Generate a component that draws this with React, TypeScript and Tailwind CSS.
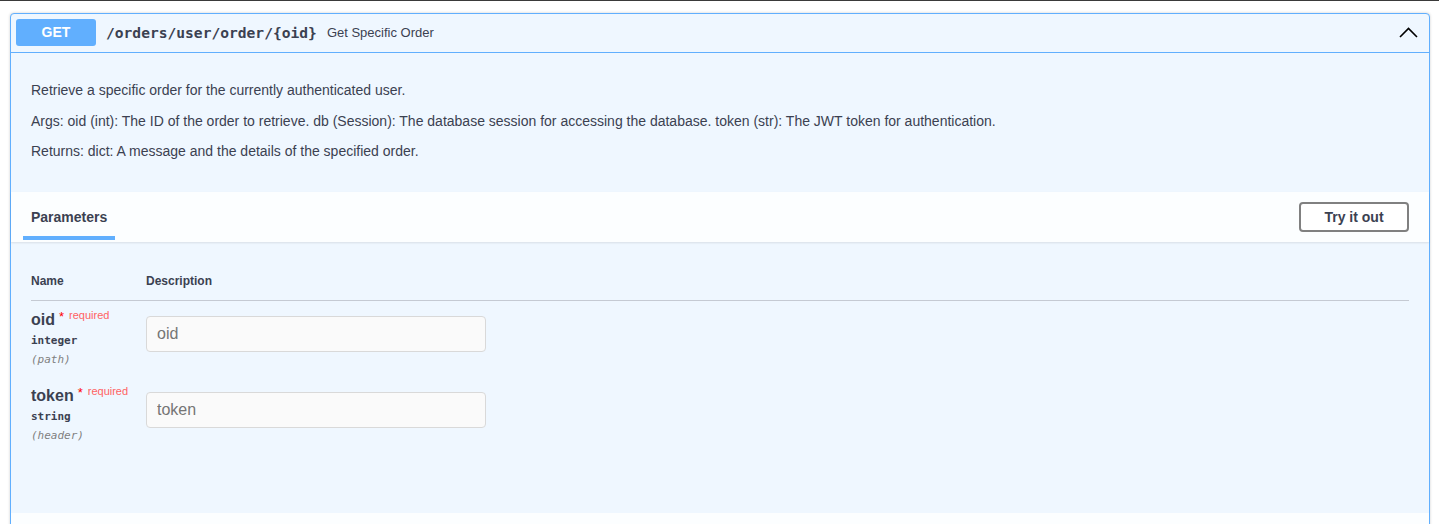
const params = [
  { name: 'oid', type: 'integer', location: '(path)' },
  { name: 'token', type: 'string', location: '(header)' },
];

const mono = "font-['DejaVu_Sans_Mono','Liberation_Mono',monospace]";

export default function App() {
  return (
    <div className="min-h-screen bg-white font-['Liberation_Sans',Arial,sans-serif] text-[#3b4151]">
      <div className="h-px bg-[#3a3a3a]" />

      <div className="ml-[10px] mt-[12px] w-[1420px] rounded border border-[#61affe] bg-[#eff7ff] shadow-[0_0_3px_rgba(0,0,0,0.19)]">
        {/* Summary */}
        <div className="flex items-center border-b border-[#61affe] px-[5px] pt-[5px] pb-[6px]">
          <span className="flex h-[27px] w-[80px] items-center justify-center rounded-[3px] bg-[#61affe] text-[14px] font-bold text-white">
            GET
          </span>
          <span className={`pl-[10px] pr-[10px] text-[14.6px] font-bold text-[#3b4151] ${mono}`}>
            /orders/user/order/{'{oid}'}
          </span>
          <span className="text-[13px] text-[#3b4151]">Get Specific Order</span>
          <svg className="ml-auto mr-[6px]" width="19" height="11" viewBox="0 0 19 11" fill="none">
            <polyline points="1,10 9.5,1.5 18,10" stroke="#000" strokeWidth="1.6" />
          </svg>
        </div>

        {/* Description */}
        <div className="flex flex-col gap-[14.5px] px-[20px] pt-[29px] pb-[33px] text-[14px] leading-[16px]">
          <p>Retrieve a specific order for the currently authenticated user.</p>
          <p>Args: oid (int): The ID of the order to retrieve. db (Session): The database session for accessing the database. token (str): The JWT token for authentication.</p>
          <p>Returns: dict: A message and the details of the specified order.</p>
        </div>

        {/* Parameters header */}
        <div className="flex h-[50px] items-center justify-between bg-[#fcfeff] px-[12px] pr-[20px] shadow-[0_1px_2px_rgba(0,0,0,0.1)]">
          <div className="relative flex h-full items-center px-[8px] text-[14px] font-bold">
            Parameters
            <div className="absolute bottom-[2px] left-0 right-0 h-[4px] bg-[#61affe]" />
          </div>
          <button className="h-[30px] w-[110px] rounded border-2 border-[#808080] bg-white text-[14px] font-bold text-[#3b4151]">
            Try it out
          </button>
        </div>

        {/* Table */}
        <div className="px-[20px] pt-[30px] pb-[69px]">
          <div className="flex border-b border-[#c5cad3] pb-[10px] text-[12px] font-bold">
            <div className="w-[115px]">Name</div>
            <div>Description</div>
          </div>
          {params.map((p, i) => (
            <div key={p.name} className={`flex ${i === 0 ? 'pt-[10px]' : 'pt-[19px]'}`}>
              <div className="w-[115px]">
                <div className="flex items-start">
                  <span className="text-[16px] font-bold leading-[18px] text-[#3b4151]">{p.name}</span>
                  <span className="ml-[4px] mt-[-1px] text-[13px] leading-[14px] text-[#ff0000]">*</span>
                  <span className="ml-[5px] mt-[-2px] text-[11px] leading-[12px] text-[#ff6262]">required</span>
                </div>
                <div className={`mt-[4px] text-[11px] font-semibold leading-[16px] ${mono}`}>{p.type}</div>
                <div className={`mt-[3px] text-[11px] italic leading-[16px] text-[#808080] ${mono}`}>{p.location}</div>
              </div>
              <div className="pt-[5px]">
                <input
                  placeholder={p.name}
                  className="h-[36px] w-[340px] rounded border border-[#d9d9d9] bg-[#fafafa] px-[10px] text-[16px] text-[#3b4151] placeholder:text-[#757575] focus:outline-none"
                />
              </div>
            </div>
          ))}
        </div>

        {/* Responses header */}
        <div className="h-[40px] bg-[#fcfeff]" />
      </div>
    </div>
  );
}
